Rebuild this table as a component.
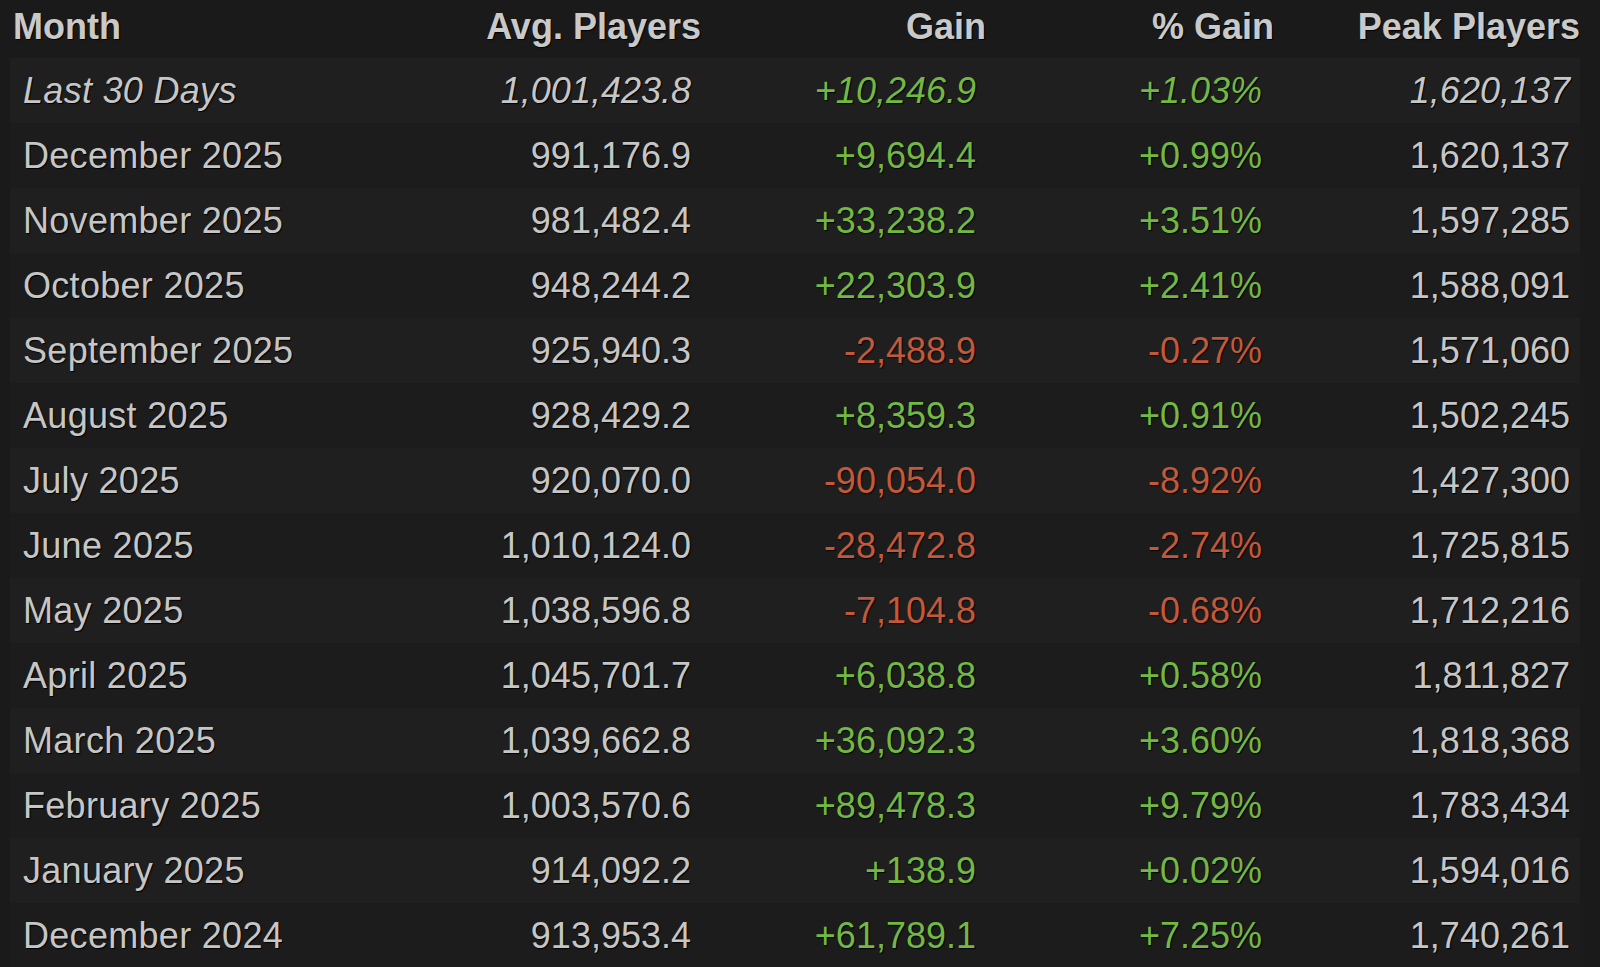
import React from "react";

type Row = {
  month: string;
  avg: string;
  gain: string;
  pct: string;
  peak: string;
};

const rows: Row[] = [
  { month: "Last 30 Days", avg: "1,001,423.8", gain: "+10,246.9", pct: "+1.03%", peak: "1,620,137" },
  { month: "December 2025", avg: "991,176.9", gain: "+9,694.4", pct: "+0.99%", peak: "1,620,137" },
  { month: "November 2025", avg: "981,482.4", gain: "+33,238.2", pct: "+3.51%", peak: "1,597,285" },
  { month: "October 2025", avg: "948,244.2", gain: "+22,303.9", pct: "+2.41%", peak: "1,588,091" },
  { month: "September 2025", avg: "925,940.3", gain: "-2,488.9", pct: "-0.27%", peak: "1,571,060" },
  { month: "August 2025", avg: "928,429.2", gain: "+8,359.3", pct: "+0.91%", peak: "1,502,245" },
  { month: "July 2025", avg: "920,070.0", gain: "-90,054.0", pct: "-8.92%", peak: "1,427,300" },
  { month: "June 2025", avg: "1,010,124.0", gain: "-28,472.8", pct: "-2.74%", peak: "1,725,815" },
  { month: "May 2025", avg: "1,038,596.8", gain: "-7,104.8", pct: "-0.68%", peak: "1,712,216" },
  { month: "April 2025", avg: "1,045,701.7", gain: "+6,038.8", pct: "+0.58%", peak: "1,811,827" },
  { month: "March 2025", avg: "1,039,662.8", gain: "+36,092.3", pct: "+3.60%", peak: "1,818,368" },
  { month: "February 2025", avg: "1,003,570.6", gain: "+89,478.3", pct: "+9.79%", peak: "1,783,434" },
  { month: "January 2025", avg: "914,092.2", gain: "+138.9", pct: "+0.02%", peak: "1,594,016" },
  { month: "December 2024", avg: "913,953.4", gain: "+61,789.1", pct: "+7.25%", peak: "1,740,261" },
];

// same column edges for header and body so the numbers line up
const cols = "grid grid-cols-[410px_281px_285px_288px_306px]";

export default function App() {
  return (
    <div className="w-[1600px] h-[967px] overflow-hidden bg-[#1a1a1a] pl-[10px] pr-[20px] font-['Liberation_Sans',Arial,sans-serif] text-[#c6c6c6] [text-shadow:1px_1px_1px_#000]">
      {/* header */}
      <div className={`${cols} h-[58px] items-center pb-[4px] text-[36px] font-bold text-[#c9c9c9]`}>
        <div className="pl-[3px]">Month</div>
        <div className="text-right">Avg. Players</div>
        <div className="text-right">Gain</div>
        <div className="text-right">% Gain</div>
        <div className="text-right">Peak Players</div>
      </div>

      {/* body */}
      {rows.map((r, i) => {
        const up = !r.gain.startsWith("-");
        const color = up ? "text-[#72b843]" : "text-[#c2593a]";
        return (
          <div
            key={r.month}
            className={`${cols} h-[65px] items-center text-[36px] ${
              i % 2 === 0 ? "bg-[#1f1f1f]" : "bg-[#1c1c1c]"
            } ${i === 0 ? "italic" : ""}`}
          >
            <div className="pl-[13px] tracking-[0.3px]">{r.month}</div>
            <div className="text-right pr-[10px]">{r.avg}</div>
            <div className={`text-right pr-[10px] ${color}`}>{r.gain}</div>
            <div className={`text-right pr-[12px] ${color}`}>{r.pct}</div>
            <div className="text-right pr-[10px]">{r.peak}</div>
          </div>
        );
      })}
    </div>
  );
}
